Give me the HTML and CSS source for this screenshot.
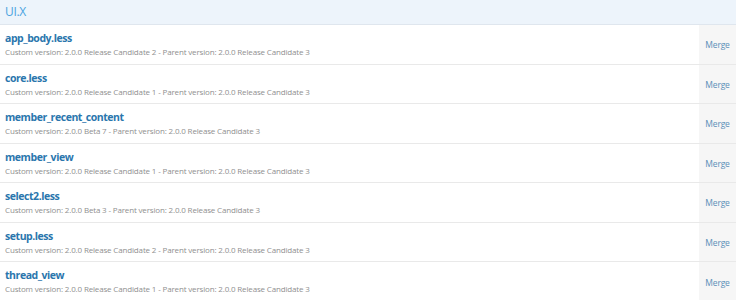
FILE: index.html
```html
<!DOCTYPE html>
<html>
<head>
<meta charset="utf-8">
<link rel="stylesheet" href="styles.css">
</head>
<body>
<div class="block">
  <div class="block-head">UI.X</div>
  <ul class="list">
    <li class="row"><div class="main"><a class="title">app_body.less</a><div class="meta">Custom version: 2.0.0 Release Candidate 2 - Parent version: 2.0.0 Release Candidate 3</div></div><div class="action"><a>Merge</a></div></li>
    <li class="row"><div class="main"><a class="title">core.less</a><div class="meta">Custom version: 2.0.0 Release Candidate 1 - Parent version: 2.0.0 Release Candidate 3</div></div><div class="action"><a>Merge</a></div></li>
    <li class="row"><div class="main"><a class="title">member_recent_content</a><div class="meta">Custom version: 2.0.0 Beta 7 - Parent version: 2.0.0 Release Candidate 3</div></div><div class="action"><a>Merge</a></div></li>
    <li class="row"><div class="main"><a class="title">member_view</a><div class="meta">Custom version: 2.0.0 Release Candidate 1 - Parent version: 2.0.0 Release Candidate 3</div></div><div class="action"><a>Merge</a></div></li>
    <li class="row"><div class="main"><a class="title">select2.less</a><div class="meta">Custom version: 2.0.0 Beta 3 - Parent version: 2.0.0 Release Candidate 3</div></div><div class="action"><a>Merge</a></div></li>
    <li class="row"><div class="main"><a class="title">setup.less</a><div class="meta">Custom version: 2.0.0 Release Candidate 2 - Parent version: 2.0.0 Release Candidate 3</div></div><div class="action"><a>Merge</a></div></li>
    <li class="row"><div class="main"><a class="title">thread_view</a><div class="meta">Custom version: 2.0.0 Release Candidate 1 - Parent version: 2.0.0 Release Candidate 3</div></div><div class="action"><a>Merge</a></div></li>
  </ul>
</div>
</body>
</html>
```
FILE: styles.css
```css
html, body {
  margin: 0;
  padding: 0;
  background: #fff;
  font-family: "Open Sans", "Noto Sans", sans-serif;
}
.block {
  width: 736px;
}
.block-head {
  height: 25px;
  box-sizing: border-box;
  padding: 4px 5px 0;
  background: #edf4fb;
  border-bottom: 1px solid #dfe6ee;
  color: #4aa3e0;
  font-size: 12px;
  line-height: 16px;
  letter-spacing: -0.3px;
}
.list {
  list-style: none;
  margin: 0;
  padding: 0;
}
.row {
  display: flex;
  height: 39.5px;
  box-sizing: border-box;
  border-bottom: 1px solid #e9e9e9;
}
.row:last-child {
  border-bottom: none;
}
.main {
  flex: 1;
  padding: 6px 5px 0;
  display: flex;
  flex-direction: column;
}
.title {
  color: #2a76ad;
  font-weight: bold;
  font-size: 10.5px;
  line-height: 15px;
  letter-spacing: -0.45px;
}
.meta {
  color: #8f8f8f;
  font-size: 8px;
  line-height: 12px;
  letter-spacing: -0.16px;
}
.action {
  width: 37px;
  background: #f6f6f6;
  display: flex;
  align-items: center;
  justify-content: center;
  padding-top: 1px;
}
.action a {
  color: #5a8fb8;
  font-size: 8.5px;
  letter-spacing: -0.2px;
}
```
